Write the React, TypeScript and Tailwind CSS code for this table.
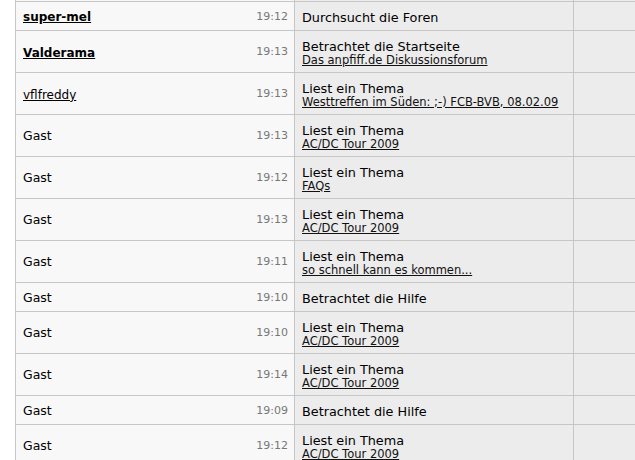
import React from 'react';

type Row = {
  name: string;
  kind: 'bold' | 'link' | 'plain';
  time: string;
  action: string;
  topic?: string;
};

const rows: Row[] = [
  { name: 'super-mel', kind: 'bold', time: '19:12', action: 'Durchsucht die Foren' },
  { name: 'Valderama', kind: 'bold', time: '19:13', action: 'Betrachtet die Startseite', topic: 'Das anpfiff.de Diskussionsforum' },
  { name: 'vflfreddy', kind: 'link', time: '19:13', action: 'Liest ein Thema', topic: 'Westtreffen im Süden: ;-) FCB-BVB, 08.02.09' },
  { name: 'Gast', kind: 'plain', time: '19:13', action: 'Liest ein Thema', topic: 'AC/DC Tour 2009' },
  { name: 'Gast', kind: 'plain', time: '19:12', action: 'Liest ein Thema', topic: 'FAQs' },
  { name: 'Gast', kind: 'plain', time: '19:13', action: 'Liest ein Thema', topic: 'AC/DC Tour 2009' },
  { name: 'Gast', kind: 'plain', time: '19:11', action: 'Liest ein Thema', topic: 'so schnell kann es kommen...' },
  { name: 'Gast', kind: 'plain', time: '19:10', action: 'Betrachtet die Hilfe' },
  { name: 'Gast', kind: 'plain', time: '19:10', action: 'Liest ein Thema', topic: 'AC/DC Tour 2009' },
  { name: 'Gast', kind: 'plain', time: '19:14', action: 'Liest ein Thema', topic: 'AC/DC Tour 2009' },
  { name: 'Gast', kind: 'plain', time: '19:09', action: 'Betrachtet die Hilfe' },
  { name: 'Gast', kind: 'plain', time: '19:12', action: 'Liest ein Thema', topic: 'AC/DC Tour 2009' },
];

const font = { fontFamily: '"DejaVu Sans", Verdana, sans-serif' };

const UserName: React.FC<{ row: Row }> = ({ row }) => {
  if (row.kind === 'bold') return <a className="font-bold underline text-black cursor-pointer">{row.name}</a>;
  if (row.kind === 'link') return <a className="underline text-black cursor-pointer">{row.name}</a>;
  return <span className="text-black text-[12.5px]">{row.name}</span>;
};

export default function App() {
  return (
    <div className="w-[635px] h-[460px] overflow-hidden bg-white pl-[15px]" style={font}>
      <div className="w-[700px] border-l border-[#c6c6c6]">
        {/* tail of the previous row */}
        <div className="flex h-[2px] border-b border-[#c6c6c6]">
          <div className="w-[279px] bg-[#f8f8f8] border-r border-[#c6c6c6]" />
          <div className="w-[279px] bg-[#ececec] border-r border-[#c6c6c6]" />
          <div className="flex-1 bg-[#ececec]" />
        </div>
        {rows.map((r, i) => (
          <div key={i} className={`flex border-b border-[#c6c6c6] ${r.topic ? 'h-[42px]' : 'h-[29px]'}`}>
            <div className="w-[279px] bg-[#f8f8f8] border-r border-[#c6c6c6] flex items-center justify-between pl-[7px] pr-[6px] pt-[2px] text-[12px]">
              <UserName row={r} />
              <span className="text-[11px] text-[#777]">{r.time}</span>
            </div>
            <div className="w-[279px] bg-[#ececec] border-r border-[#c6c6c6] flex flex-col justify-center pl-[7px] pt-[2px] text-black">
              <span className="text-[12.8px] leading-[15px]">{r.action}</span>
              {r.topic && (
                <a className="text-[11.5px] leading-[13px] underline text-[#111] cursor-pointer">{r.topic}</a>
              )}
            </div>
            <div className="flex-1 bg-[#ececec]" />
          </div>
        ))}
      </div>
    </div>
  );
}
